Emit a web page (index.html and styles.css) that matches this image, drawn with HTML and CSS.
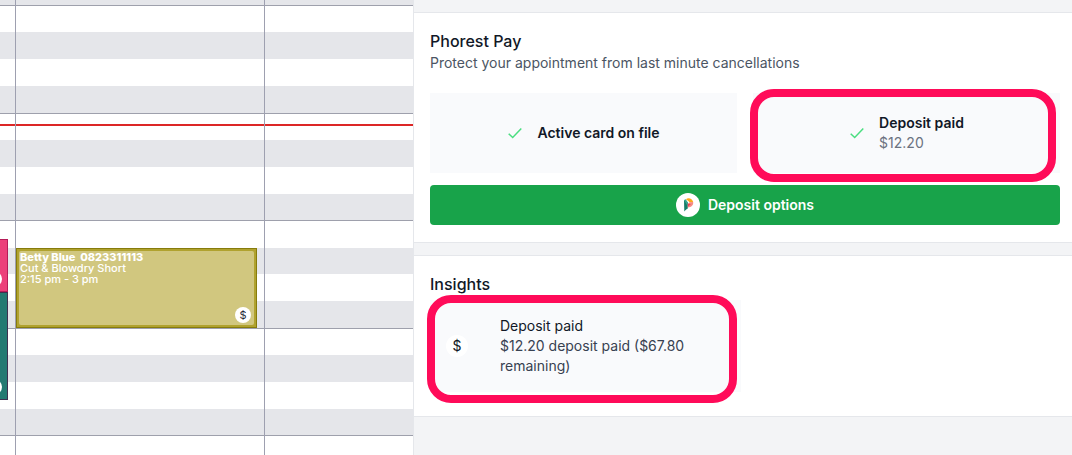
FILE: index.html
```html
<!DOCTYPE html>
<html lang="en">
<head>
<meta charset="utf-8">
<title>Appointments</title>
<link rel="stylesheet" href="styles.css">
</head>
<body>
<div class="app">
  <section class="calendar" aria-label="Calendar">
    <div class="hours">
      <div class="hour hour-last"></div>
      <div class="hour"><i></i><i></i><i></i><i></i></div>
      <div class="hour hour-short"><i></i><i></i><i></i><i></i></div>
      <div class="hour hour-offset"><i></i><i></i><i></i><i></i></div>
      <div class="hour hour-short"><i></i><i></i><i></i><i></i></div>
      <div class="hour"><i></i><i></i><i></i><i></i></div>
    </div>
    <div class="now"></div>
    <div class="columns">
      <div class="column">
        <div class="block block-pink"><span class="dot"></span></div>
        <div class="block block-teal"><span class="dot"></span></div>
      </div>
      <div class="column">
        <article class="event">
          <strong class="event-name">Betty Blue&nbsp; 0823311113</strong>
          <span>Cut &amp; Blowdry Short</span>
          <span>2:15 pm - 3 pm</span>
          <span class="event-badge">$</span>
        </article>
      </div>
      <div class="column"></div>
    </div>
  </section>

  <main class="panel">
    <section class="card card-pay">
      <h2 class="title">Phorest Pay</h2>
      <p class="subtitle">Protect your appointment from last minute cancellations</p>
      <div class="tiles">
        <div class="tile">
          <svg class="check" viewBox="0 0 16 16" aria-hidden="true"><path d="M1.700 8.700L5.700 12.500L14.300 3.600"/></svg>
          <p class="tile-label">Active card on file</p>
        </div>
        <div class="tile">
          <svg class="check" viewBox="0 0 16 16" aria-hidden="true"><path d="M1.700 8.700L5.700 12.500L14.300 3.600"/></svg>
          <div>
            <p class="tile-label">Deposit paid</p>
            <p class="tile-amount">$12.20</p>
          </div>
          <span class="highlight highlight-deposit"></span>
        </div>
      </div>
      <button class="options" type="button">
        <svg class="logo" viewBox="0 0 24 24" aria-hidden="true">
          <circle cx="12" cy="12" r="12" fill="#fff"/>
          <path d="M8 7L11.800 9.500V15.500C10.500 16 9.500 17.200 8.300 18.600Z" fill="#147d68"/>
          <path d="M8 7L9.800 6.200L11.800 9.500L11 12Z" fill="#35a58e"/>
          <path d="M9.800 6.200C12 4.200 16.300 5 17.200 9L13.500 9.300C12.800 8 11.500 7.200 9.800 6.200Z" fill="#fba919"/>
          <path d="M13.500 9.300L17.200 9C17.500 12.200 15.500 14.300 11.800 14.500V12Z" fill="#f68a84"/>
          <path d="M11.800 10.300L14.800 11.300L11.800 13.700Z" fill="#ed4356"/>
        </svg>
        Deposit options
      </button>
    </section>

    <section class="card card-insights">
      <h2 class="title">Insights</h2>
      <div class="insight">
        <span class="insight-icon">$</span>
        <div class="insight-text">
          <p class="insight-label">Deposit paid</p>
          <p>$12.20 deposit paid ($67.80 remaining)</p>
        </div>
        <span class="highlight highlight-insight"></span>
      </div>
    </section>
  </main>
</div>
</body>
</html>
```
FILE: styles.css
```css
* { box-sizing: border-box; }
body { margin: 0; font-family: Inter, sans-serif; font-size: 14px; line-height: 20px; color: #111827; background: #f3f4f6; }
h2, p { margin: 0; }

.app { display: grid; grid-template-columns: 413fr 659fr; min-height: 100vh; }

/* Calendar */
.calendar { position: relative; overflow: hidden; background: #fff; }
.hours { position: absolute; inset: 0; }
.hour { display: grid; grid-template-rows: 27px 27px 27px 1fr; height: 108px; }
.hour-short { height: 107px; }
.hour-offset { grid-template-rows: 28px 26px 27px 1fr; }
.hour-last { height: 5px; background: #e5e6ea; }
.hour i:nth-child(even) { background: #e5e6ea; }
.hour i:first-child { border-top: 1px solid #9ea0ac; }
.now { position: absolute; left: 0; right: 0; top: 124px; height: 2px; background: #dc2626; }
.columns { position: absolute; inset: 0; display: grid; grid-template-columns: 16px 249px 1fr; }
.column { position: relative; border-right: 1px solid #9ea0b0; }
.column:last-child { border-right: 0; }

.block { position: absolute; left: -100px; right: 7px; overflow: hidden; border: 1px solid #b51c58; }
.block-pink { top: 239px; height: 53px; background: #ec407a; }
.block-teal { top: 292px; height: 108px; background: #237a72; border-color: #3d3150; }
.dot { position: absolute; right: 5px; bottom: 4px; width: 16px; height: 16px; border-radius: 50%; background: #fff; }

.event { position: absolute; top: 248px; left: 0; right: 7px; height: 80px; padding: 3px; isolation: isolate; border: 1px solid #877c0c; background: #b0a22f; color: #fff; font-size: 11px; line-height: 11px; font-weight: 500; }
.event::before { content: ""; position: absolute; inset: 2px; z-index: -1; border-radius: 2px; background: #d1c77f; }
.event > * { display: block; }
.event-name { font-weight: 800; }
.event-badge { position: absolute; right: 5px; bottom: 4px; width: 16px; height: 16px; border-radius: 50%; background: #fff; color: #1f2937; font-weight: 400; line-height: 16px; text-align: center; }

/* Side panel */
.panel { display: flex; flex-direction: column; gap: 12px; padding-top: 12px; border-left: 1px solid #e5e7eb; }
.card { padding: 16px 12px 17px 16px; background: #fff; border: solid #e5e7eb; border-width: 1px 0; }
.card-insights { padding-bottom: 24px; }
.title { font-size: 16px; line-height: 24px; font-weight: 500; }
.subtitle { color: #4b5563; }
.tiles { display: grid; grid-template-columns: 1fr 1fr; gap: 16px; margin: 20px 0 12px; }
.tile { position: relative; display: flex; align-items: center; justify-content: center; gap: 14px; min-height: 80px; background: #f9fafc; }
.tile-label { font-weight: 600; }
.tile-amount { color: #6b7280; }
.check { width: 16px; height: 16px; fill: none; stroke: #4ade80; stroke-width: 1.500; }

.options { display: flex; align-items: center; justify-content: center; gap: 8px; width: 100%; height: 40px; padding: 0; border: 0; border-radius: 4px; background: #18a34a; color: #fff; font: inherit; font-weight: 600; cursor: pointer; }
.logo { width: 24px; height: 24px; }

.insight { position: relative; display: flex; align-items: center; gap: 32px; width: 49%; min-width: 311px; margin-top: 4px; padding: 16px; background: #f9fafc; }
.insight-icon { flex: none; width: 22px; height: 22px; border-radius: 50%; background: #fff; line-height: 22px; text-align: center; }
.insight-text { flex: 1; color: #374151; }
.insight-label { color: #111827; }

.highlight { position: absolute; border: 8px solid #ff0b59; border-radius: 24px; pointer-events: none; }
.highlight-deposit { inset: -4px 4px -9px -3px; }
.highlight-insight { inset: -5px 4px -11px -3px; }
```
